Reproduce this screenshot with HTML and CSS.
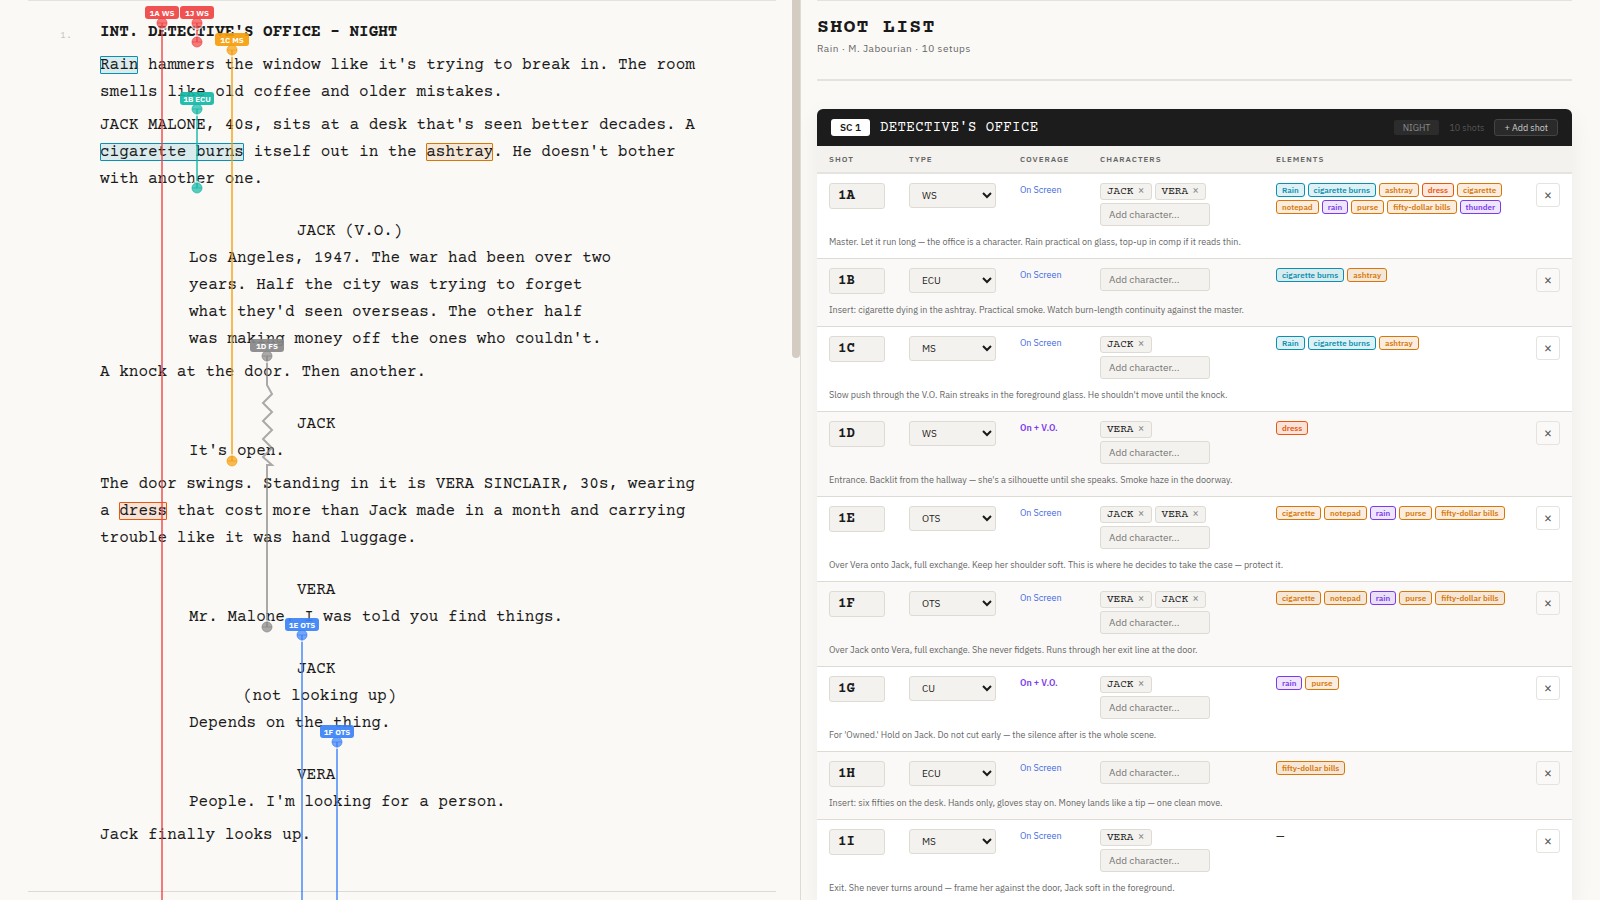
FILE: index.html
```html
<!DOCTYPE html>
<html lang="en">
<head>
    <meta charset="UTF-8">
    <meta name="viewport" content="width=device-width, initial-scale=1.0">
    <title>Rain - Shot List</title>
    <link rel="stylesheet" href="styles.css">
</head>
<body>
    <main class="script-pane">
        <div class="script-page">
            <section class="scene">
                <span class="scene-number">1.</span>
                <h2 class="scene-heading">INT. DETECTIVE'S OFFICE - NIGHT</h2>
                <p class="action"><mark class="fx">Rain</mark> hammers the window like it's trying to break in. The room smells like old coffee and older mistakes.</p>
                <p class="action">JACK MALONE, 40s, sits at a desk that's seen better decades. A <mark class="fx">cigarette burns</mark> itself out in the <mark class="prop">ashtray</mark>. He doesn't bother with another one.</p>
                <p class="cue">JACK (V.O.)</p>
                <p class="dialogue">Los Angeles, 1947. The war had been over two years. Half the city was trying to forget what they'd seen overseas. The other half was making money off the ones who couldn't.</p>
                <p class="action">A knock at the door. Then another.</p>
                <p class="cue">JACK</p>
                <p class="dialogue">It's open.</p>
                <p class="action">The door swings. Standing in it is VERA SINCLAIR, 30s, wearing a <mark class="costume">dress</mark> that cost more than Jack made in a month and carrying trouble like it was hand luggage.</p>
                <p class="cue">VERA</p>
                <p class="dialogue">Mr. Malone. I was told you find things.</p>
                <p class="cue">JACK</p>
                <p class="paren">(not looking up)</p>
                <p class="dialogue">Depends on the thing.</p>
                <p class="cue">VERA</p>
                <p class="dialogue">People. I'm looking for a person.</p>
                <p class="action">Jack finally looks up.</p>
            </section>
        </div>
        <div class="scrollbar"><div class="thumb"></div></div>
        <svg class="lining" id="lining" aria-label="Shot coverage lines"></svg>
    </main>

    <aside class="shots-pane">
        <header class="list-header">
            <h1>SHOT LIST</h1>
            <p>Rain · M. Jabourian · 10 setups</p>
        </header>

        <section class="card">
            <div class="card-header">
                <span class="scene-badge">SC 1</span>
                <h3>DETECTIVE'S OFFICE</h3>
                <span class="time">NIGHT</span>
                <span class="count">10 shots</span>
                <button type="button" class="add-shot">+ Add shot</button>
            </div>
            <table>
                <colgroup>
                    <col class="col-shot">
                    <col class="col-type">
                    <col class="col-coverage">
                    <col class="col-characters">
                    <col>
                    <col class="col-remove">
                </colgroup>
                <thead>
                    <tr>
                        <th>SHOT</th>
                        <th>TYPE</th>
                        <th>COVERAGE</th>
                        <th>CHARACTERS</th>
                        <th>ELEMENTS</th>
                        <th></th>
                    </tr>
                </thead>
                <tbody id="shots"></tbody>
            </table>
        </section>
    </aside>

    <script src="script.js"></script>
</body>
</html>
```
FILE: styles.css
```css
* {
    box-sizing: border-box;
}
body {
    margin: 0;
    height: 100vh;
    display: flex;
    overflow: hidden;
    background-color: #faf9f6;
    color: #1a1a1a;
    font-family: "IBM Plex Sans", "Liberation Sans", sans-serif;
}
h1, h2, h3, p {
    margin: 0;
}
input, select, button {
    font-family: inherit;
    color: inherit;
    margin: 0;
}

/* script */
.script-pane {
    position: relative;
    width: 50%;
    display: flex;
    overflow: hidden;
}
.script-page {
    flex: 1;
    padding: 0 16px 0 28px;
}
.scene {
    position: relative;
    padding: 18px 72px 42px;
    border-top: 1px solid #e5e3de;
    border-bottom: 1px solid #dcdad4;
    font-family: "Courier Prime", "Liberation Mono", monospace;
    font-size: 16px;
    line-height: 27px;
}
.scene-number {
    position: absolute;
    left: 32px;
    top: 21px;
    font-size: 10px;
    color: #c4c2bd;
}
.scene-heading {
    font-size: 16px;
    font-weight: bold;
}
.action {
    max-width: 604px;
    margin-top: 6px;
}
.cue {
    margin: 25px 0 0 197px;
}
.paren {
    margin-left: 143px;
}
.dialogue {
    max-width: 516px;
    padding-left: 89px;
}
mark {
    color: inherit;
    border-radius: 1px;
    outline: 1px solid;
    outline-offset: -1px;
}
mark.fx {
    background-color: rgba(8, 145, 178, 0.13);
    outline-color: #0891b2;
}
mark.prop {
    background-color: rgba(217, 119, 6, 0.13);
    outline-color: #d97706;
}
mark.costume {
    background-color: rgba(234, 88, 12, 0.13);
    outline-color: #ea580c;
}
.scrollbar {
    width: 8px;
}
.thumb {
    height: 358px;
    background-color: #d4ccc2;
    border-radius: 0 0 4px 4px;
}
.lining {
    position: absolute;
    left: 0;
    top: 0;
    width: 100%;
    height: 100%;
}
.lining text {
    font-size: 8px;
    font-weight: bold;
    fill: #fff;
    text-anchor: middle;
}

/* shot list */
.shots-pane {
    width: 50%;
    padding: 0 28px 0 16px;
    border-left: 1px solid #dedbd4;
    overflow: hidden;
}
.list-header {
    padding: 15px 0 22px;
    border-top: 1px solid #e5e3de;
    border-bottom: 2px solid #e5e3de;
    margin-bottom: 28px;
}
.list-header h1 {
    font-family: "Courier Prime", "Liberation Mono", monospace;
    font-size: 20px;
    line-height: 24px;
    letter-spacing: 0.06em;
}
.list-header p {
    margin-top: 1px;
    font-size: 10px;
    line-height: 16px;
    letter-spacing: 0.05em;
    color: #666;
}
.card {
    border-radius: 6px;
    background-color: #fff;
    box-shadow: 0 8px 24px rgba(0, 0, 0, 0.06);
    overflow: hidden;
}
.card-header {
    display: flex;
    align-items: center;
    height: 37px;
    padding: 0 14px;
    background-color: #1c1c1c;
    color: #fff;
}
.scene-badge {
    padding: 0 9px;
    margin-right: 10px;
    border-radius: 3px;
    background-color: #fff;
    color: #1a1a1a;
    font-size: 10px;
    font-weight: 600;
    line-height: 17px;
}
.card-header h3 {
    flex: 1;
    font-family: "Courier Prime", "Liberation Mono", monospace;
    font-size: 14px;
    font-weight: normal;
    letter-spacing: 0.03em;
}
.time {
    padding: 0 9px;
    border-radius: 2px;
    background-color: #2c2c2c;
    color: #8a8a8a;
    font-size: 9px;
    line-height: 15px;
}
.count {
    margin: 0 10px;
    color: #555;
    font-size: 9px;
}
.add-shot {
    height: 17px;
    padding: 0 9px;
    border: 1px solid #444;
    border-radius: 3px;
    background-color: #2a2a2a;
    color: #ccc;
    font-size: 9px;
}
table {
    width: 100%;
    table-layout: fixed;
    border-collapse: separate;
    border-spacing: 0;
}
.col-shot, .col-coverage {
    width: 80px;
}
.col-type {
    width: 111px;
}
.col-characters {
    width: 176px;
}
.col-remove {
    width: 48px;
}
th {
    height: 28px;
    padding: 0 12px;
    border-bottom: 2px solid #e5e3de;
    background-color: #f4f2ee;
    color: #666;
    font-size: 8px;
    font-weight: 600;
    letter-spacing: 1px;
    text-align: left;
}
td {
    padding: 9px 12px 8px;
    vertical-align: top;
    font-size: 9px;
    line-height: 14px;
}
.note {
    padding: 0 12px 8px;
    border-bottom: 1px solid #dedbd4;
    color: #666;
    line-height: 16px;
}
.even td {
    background-color: #faf9f7;
}
.shot-id, .shot-type, .add-character {
    display: block;
    border: 1px solid #dedbd4;
    border-radius: 3px;
    background-color: #f4f2ee;
}
.shot-id {
    width: 56px;
    height: 26px;
    padding: 0 8px 1px;
    font-family: "Courier Prime", "Liberation Mono", monospace;
    font-size: 14px;
    font-weight: bold;
}
.shot-type {
    width: 100%;
    height: 25px;
    padding: 0 0 0 8px;
    font-size: 10px;
}
.screen {
    color: #4169e1;
}
.voice {
    color: #7c3aed;
    font-weight: 600;
}
.chips {
    display: flex;
    gap: 3px;
    margin-bottom: 3px;
}
.chip {
    display: flex;
    align-items: center;
    gap: 4px;
    height: 17px;
    padding: 0 6px;
    border: 1px solid #dedbd4;
    border-radius: 3px;
    background-color: #f4f2ee;
    font-family: "Courier Prime", "Liberation Mono", monospace;
    font-size: 11px;
}
.chip button {
    padding: 0;
    border: none;
    background: none;
    color: #888;
    font-size: 12px;
    line-height: 14px;
}
.add-character {
    width: 110px;
    height: 23px;
    padding: 0 8px;
    font-size: 10px;
}
.add-character::placeholder {
    color: #757575;
}
.tags {
    display: flex;
    flex-wrap: wrap;
    gap: 3px;
}
.tag {
    height: 14px;
    padding: 0 5px;
    border: 1px solid;
    border-radius: 3px;
    font-size: 8px;
    font-weight: 600;
    line-height: 12px;
}
.tag.fx {
    color: #0891b2;
    background-color: rgba(8, 145, 178, 0.13);
}
.tag.prop {
    color: #d97706;
    background-color: rgba(217, 119, 6, 0.13);
}
.tag.costume {
    color: #ea580c;
    background-color: rgba(234, 88, 12, 0.13);
}
.tag.sound {
    color: #7c3aed;
    background-color: rgba(124, 58, 237, 0.13);
}
.none {
    font-size: 11px;
}
.remove {
    display: block;
    width: 24px;
    height: 24px;
    padding: 0;
    border: 1px solid #e5e3de;
    border-radius: 3px;
    background: none;
    color: #555;
    font-size: 14px;
}
```
FILE: script.js
```javascript
const kinds = {
    'Rain': 'fx',
    'cigarette burns': 'fx',
    'dress': 'costume',
    'rain': 'sound',
    'thunder': 'sound'
};

const exchange = ['cigarette', 'notepad', 'rain', 'purse', 'fifty-dollar bills'];

const shots = [
    { id: '1A', type: 'WS', cast: ['JACK', 'VERA'], tags: ['Rain', 'cigarette burns', 'ashtray', 'dress', 'cigarette', 'notepad', 'rain', 'purse', 'fifty-dollar bills', 'thunder'], note: 'Master. Let it run long — the office is a character. Rain practical on glass, top-up in comp if it reads thin.' },
    { id: '1B', type: 'ECU', cast: [], tags: ['cigarette burns', 'ashtray'], note: 'Insert: cigarette dying in the ashtray. Practical smoke. Watch burn-length continuity against the master.' },
    { id: '1C', type: 'MS', cast: ['JACK'], tags: ['Rain', 'cigarette burns', 'ashtray'], note: "Slow push through the V.O. Rain streaks in the foreground glass. He shouldn't move until the knock." },
    { id: '1D', type: 'WS', voice: true, cast: ['VERA'], tags: ['dress'], note: "Entrance. Backlit from the hallway — she's a silhouette until she speaks. Smoke haze in the doorway." },
    { id: '1E', type: 'OTS', cast: ['JACK', 'VERA'], tags: exchange, note: 'Over Vera onto Jack, full exchange. Keep her shoulder soft. This is where he decides to take the case — protect it.' },
    { id: '1F', type: 'OTS', cast: ['VERA', 'JACK'], tags: exchange, note: 'Over Jack onto Vera, full exchange. She never fidgets. Runs through her exit line at the door.' },
    { id: '1G', type: 'CU', voice: true, cast: ['JACK'], tags: ['rain', 'purse'], note: "For 'Owned.' Hold on Jack. Do not cut early — the silence after is the whole scene." },
    { id: '1H', type: 'ECU', cast: [], tags: ['fifty-dollar bills'], note: 'Insert: six fifties on the desk. Hands only, gloves stay on. Money lands like a tip — one clean move.' },
    { id: '1I', type: 'MS', cast: ['VERA'], tags: [], note: 'Exit. She never turns around — frame her against the door, Jack soft in the foreground.' }
];

const types = ['WS', 'FS', 'MS', 'CU', 'ECU', 'OTS'];

document.getElementById('shots').innerHTML = shots.map((shot, i) => {
    const row = i % 2 ? 'even' : 'odd';
    const options = types.map(t => `<option${t === shot.type ? ' selected' : ''}>${t}</option>`).join('');
    const chips = shot.cast.map(name => `<span class="chip">${name}<button type="button" aria-label="Remove ${name}">×</button></span>`).join('');
    const tags = shot.tags.map(tag => `<span class="tag ${kinds[tag] || 'prop'}">${tag}</span>`).join('');
    return `
        <tr class="${row}">
            <td><input class="shot-id" type="text" value="${shot.id}" aria-label="Shot"></td>
            <td><select class="shot-type" aria-label="Type">${options}</select></td>
            <td><span class="${shot.voice ? 'voice' : 'screen'}">${shot.voice ? 'On + V.O.' : 'On Screen'}</span></td>
            <td>
                ${chips ? `<div class="chips">${chips}</div>` : ''}
                <input class="add-character" type="text" placeholder="Add character..." aria-label="Add character">
            </td>
            <td>${tags ? `<div class="tags">${tags}</div>` : '<span class="none">—</span>'}</td>
            <td><button class="remove" type="button" aria-label="Remove shot">×</button></td>
        </tr>
        <tr class="${row}"><td class="note" colspan="6">${shot.note}</td></tr>`;
}).join('');

// Coverage lines: x and start/end are page positions, wiggle marks off-camera dialogue
const lines = [
    { label: '1A WS', x: 162, from: 23, to: 2000, color: '#ef4444' },
    { label: '1J WS', x: 197, from: 23, to: 42, color: '#ef4444' },
    { label: '1B ECU', x: 197, from: 109, to: 188, color: '#14b8a6' },
    { label: '1C MS', x: 232, from: 50, to: 461, color: '#f59e0b' },
    { label: '1D FS', x: 267, from: 356, to: 627, color: '#888', wiggle: [385, 465] },
    { label: '1E OTS', x: 302, from: 635, to: 2000, color: '#3b82f6' },
    { label: '1F OTS', x: 337, from: 742, to: 2000, color: '#3b82f6' }
];

function linePath(line) {
    let d = `M${line.x} ${line.from}`;
    if (line.wiggle) {
        const [top, bottom] = line.wiggle;
        d += `V${top}`;
        for (let i = 0, y = top + 9; y < bottom; i++, y += 9) {
            d += `L${line.x + (i % 2 ? -4 : 5)} ${y}`;
        }
        d += `L${line.x + 5} ${bottom}H${line.x}`;
    }
    return d + `V${line.to}`;
}

function handle(x, y) {
    return `<circle cx="${x}" cy="${y}" r="6" fill="none" stroke="#faf9f6" stroke-width="2"/>
        <circle cx="${x}" cy="${y}" r="5"/><path d="M${x - 5} ${y}h10"/>`;
}

document.getElementById('lining').innerHTML = lines.map(line => `
    <g fill="${line.color}" stroke="none" fill-opacity="0.7">
        <g stroke="${line.color}" stroke-opacity="0.7" stroke-width="2">
            <path d="${linePath(line)}" fill="none"/>
            <g stroke-width="1">${handle(line.x, line.from)}${handle(line.x, line.to)}</g>
        </g>
        <rect x="${line.x - 17}" y="${line.from - 17}" width="34" height="13" rx="3" fill-opacity="0.93"/>
        <text x="${line.x}" y="${line.from - 7}" fill-opacity="1">${line.label}</text>
    </g>`).join('');
```
